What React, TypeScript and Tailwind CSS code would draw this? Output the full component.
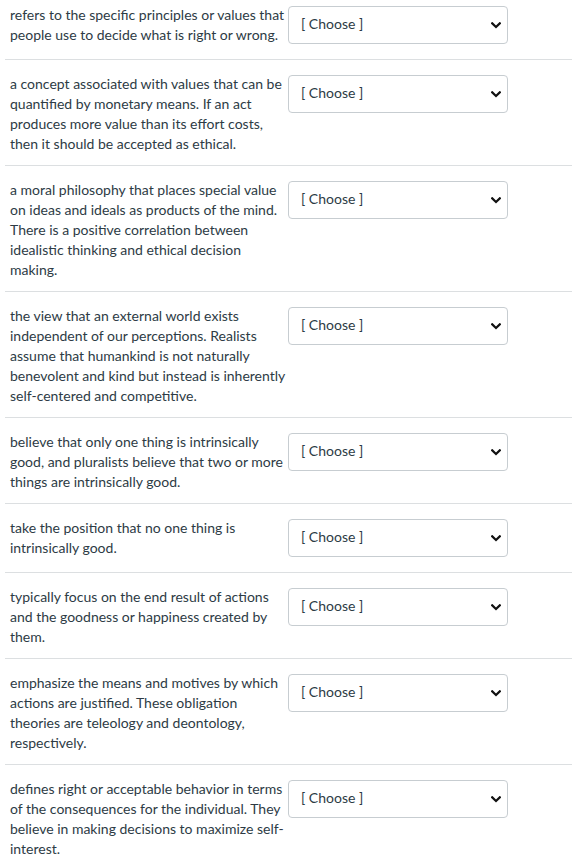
import React from "react";

const items: string[] = [
  "refers to the specific principles or values that people use to decide what is right or wrong.",
  "a concept associated with values that can be quantified by monetary means. If an act produces more value than its effort costs, then it should be accepted as ethical.",
  "a moral philosophy that places special value on ideas and ideals as products of the mind. There is a positive correlation between idealistic thinking and ethical decision making.",
  "the view that an external world exists independent of our perceptions. Realists assume that humankind is not naturally benevolent and kind but instead is inherently self-centered and competitive.",
  "believe that only one thing is intrinsically good, and pluralists believe that two or more things are intrinsically good.",
  "take the position that no one thing is intrinsically good.",
  "typically focus on the end result of actions and the goodness or happiness created by them.",
  "emphasize the means and motives by which actions are justified. These obligation theories are teleology and deontology, respectively.",
  "defines right or acceptable behavior in terms of the consequences for the individual. They believe in making decisions to maximize self-interest.",
];

function Chevron() {
  return (
    <svg width="10" height="7" viewBox="0 0 10 7" className="block">
      <path d="M1.2 1.3 L5 5 L8.8 1.3" fill="none" stroke="#111" strokeWidth="2.2" strokeLinecap="square" />
    </svg>
  );
}

export default function App() {
  return (
    <div className="w-[572px] bg-white pt-[3px] font-['Lato','Noto_Sans',sans-serif] text-[#2d3b45]">
      {items.map((t, i) => (
        <div
          key={i}
          className={
            i === 0
              ? "flex pl-[10px] pb-[11px]"
              : "flex ml-[5px] pl-[5px] border-t border-[#dcdfe1] pt-3 pb-[11px]"
          }
        >
          <div className="w-[276px] shrink-0 pt-[2px] text-[14px] leading-[20px]">{t}</div>
          <div className="ml-[2px] mt-[3px] mb-[4px] w-[220px] h-[38px] shrink-0 self-start flex items-center justify-between border border-[#c7cdd1] rounded-[4px] pl-3 pr-[6px] text-[14px] text-[#2d3b45]">
            <span className="pb-[3px] whitespace-pre">[ Choose ]</span>
            <Chevron />
          </div>
        </div>
      ))}
    </div>
  );
}
